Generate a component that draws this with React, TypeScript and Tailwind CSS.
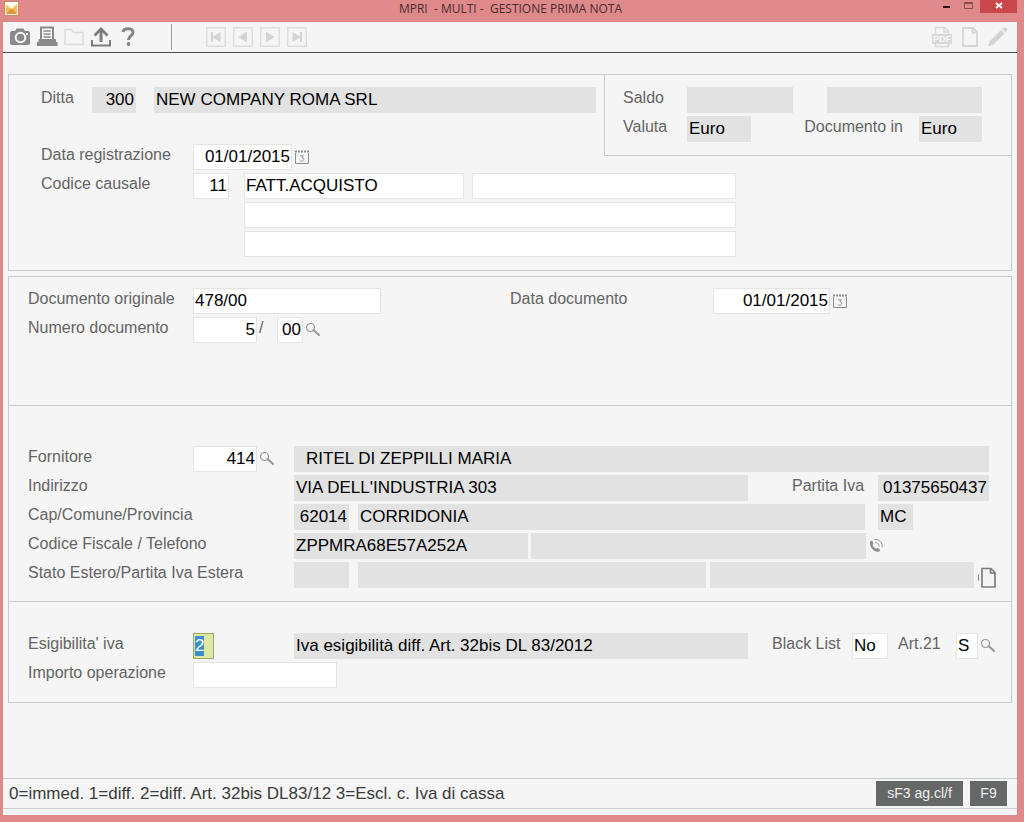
import { useEffect, useRef } from "react";
import type { ComponentProps, ReactNode } from "react";
import { clsx } from "clsx";

type FieldProps = ComponentProps<"input"> & {
  align?: "left" | "right";
  locked?: boolean;
};

function Field({ align = "left", locked = false, className, ...props }: FieldProps) {
  return (
    <input
      className={clsx(
        "h-[26px] min-w-0 border px-px text-[17px] text-black outline-none",
        locked ? "border-[#e2e2e2] bg-[#e2e2e2]" : "border-[#e4e4e4] bg-white",
        align === "right" && "text-right",
        className
      )}
      readOnly={locked}
      type="text"
      {...props}
    />
  );
}

type LabelProps = {
  children: ReactNode;
  className?: string;
  htmlFor: string;
};

function Label({ children, className, htmlFor }: LabelProps) {
  return (
    <label
      className={clsx("shrink-0 text-[16px] leading-[22px] whitespace-nowrap text-[#646464]", className)}
      htmlFor={htmlFor}
    >
      {children}
    </label>
  );
}

type IconButtonProps = {
  children: ReactNode;
  className?: string;
  disabled?: boolean;
  label: string;
};

function IconButton({ children, className, disabled, label }: IconButtonProps) {
  return (
    <button
      aria-label={label}
      className={clsx("flex shrink-0 items-center justify-center", className)}
      disabled={disabled}
      type="button"
    >
      {children}
    </button>
  );
}

function CalendarButton({ label }: { label: string }) {
  return (
    <IconButton className="mt-[5px] ml-[2px] size-4" label={label}>
      <svg className="size-4" fill="none" stroke="#8c8c8c" viewBox="0 0 16 16">
        <path d="M1.5 4v10.500h13V4" />
        <path d="M1 2.500h14" strokeDasharray="2 1" strokeWidth="2" />
        <path d="M6 6.800h3.500L8 8.800c2.600 0 2.300 3.400-.4 3.400-.8 0-1.300-.3-1.600-.7" strokeWidth="0.900" />
      </svg>
    </IconButton>
  );
}

function SearchButton({ label }: { label: string }) {
  return (
    <IconButton className="mt-[5px] ml-[2px] size-4" label={label}>
      <svg className="size-4" fill="none" stroke="#9a9a9a" viewBox="0 0 16 16">
        <circle cx="5.500" cy="5.500" r="4" strokeWidth="1.200" />
        <path d="m8.500 8 5.500 5" strokeLinecap="round" strokeWidth="2.200" />
      </svg>
    </IconButton>
  );
}

const navigation = [
  { label: "Primo", path: "M5 5v10h2v-4.500L14.500 15V5L7 9.500V5z" },
  { label: "Precedente", path: "M14 4.500v11L5.500 10z" },
  { label: "Successivo", path: "M6 4.500v11l8.500-5.500z" },
  { label: "Ultimo", path: "M15 5v10h-2v-4.500L5.500 15V5L13 9.500V5z" }
];

function TitleBar() {
  return (
    <header className="flex h-[22px] items-start">
      <div className="w-21 shrink-0 pt-px pl-px">
        <svg className="size-[15px]" viewBox="0 0 15 15">
          <path d="M.5.500h14v14H.500z" fill="#fffbe8" stroke="#c98a62" />
          <path d="M2 3.500 7.500 8 13 3.500V13H2z" fill="#f3bd58" />
          <path d="M2 13l5.500-6L13 13z" fill="#d9963d" />
          <path d="M2 3.500 7.500 8 13 3.500" fill="none" stroke="#f9dda0" />
        </svg>
      </div>
      <h1 className="flex-1 pt-px text-center font-['Open_Sans',sans-serif] text-[12px] leading-4 whitespace-pre text-[#4a2c2e]">
        MPRI  - MULTI -  GESTIONE PRIMA NOTA
      </h1>
      <div className="flex shrink-0">
        <IconButton className="h-[13px] w-[23px]" label="Riduci a icona">
          <svg className="h-[13px] w-[9px]" viewBox="0 0 9 13">
            <path d="M2 6h7v2H2z" fill="#2b1113" />
          </svg>
        </IconButton>
        <IconButton className="h-[13px] w-[23px]" label="Ingrandisci">
          <svg className="h-[13px] w-[9px]" fill="none" stroke="#8b4a4d" viewBox="0 0 9 13">
            <path d="M.5 2.500h8v6h-8zM.500 3.500h8" />
          </svg>
        </IconButton>
        <IconButton className="h-[13px] w-[37px] bg-[#c9484c]" label="Chiudi">
          <svg className="h-[13px] w-2" stroke="#fff" strokeWidth="1.800" viewBox="0 0 8 13">
            <path d="m1 3 6 5M7 3 1 8" />
          </svg>
        </IconButton>
      </div>
    </header>
  );
}

function Toolbar() {
  return (
    <div className="flex h-[31px] items-center border-b border-[#4c4c4c] bg-[#f5f5f5] pr-2 pl-[6px]">
      <div className="flex gap-[5px]">
        <IconButton className="size-[22px]" label="Cattura schermata">
          <svg className="size-[22px]" viewBox="0 0 22 22">
            <path
              d="M3 5h3l1.500-2.500h7L16 5h3q2 0 2 2v10q0 2-2 2H3q-2 0-2-2V7q0-2 2-2z"
              fill="#8a8a8a"
            />
            <circle cx="11.500" cy="11.500" fill="#8a8a8a" r="4.800" stroke="#f5f5f5" strokeWidth="2" />
            <path d="M17 7h2v2h-2z" fill="#f5f5f5" />
          </svg>
        </IconButton>
        <IconButton className="size-[22px]" label="Stampa">
          <svg className="size-[22px]" viewBox="0 0 22 22">
            <path d="M5 1.500h12V14H5z" fill="none" stroke="#8a8a8a" strokeWidth="2" />
            <path d="M7.500 5h7M7.500 8h7M7.500 11h7" stroke="#8a8a8a" strokeWidth="1.500" />
            <path d="M4 13v1.500h14V13h2v3h1.500v4H1v-4h1.500v-3z" fill="#8a8a8a" />
          </svg>
        </IconButton>
        <IconButton className="size-[22px]" disabled label="Apri cartella">
          <svg className="size-[22px]" fill="none" stroke="#dcdcdc" strokeWidth="1.500" viewBox="0 0 22 22">
            <path d="M2 3.500h6l2.500 3H20v12H2z" strokeLinejoin="round" />
          </svg>
        </IconButton>
        <IconButton className="size-[22px]" label="Carica">
          <svg className="size-[22px]" fill="none" stroke="#7d7d7d" viewBox="0 0 22 22">
            <path d="M2 14v5.500h18V14" strokeWidth="2" />
            <path d="M11 16V4" strokeWidth="3" />
            <path d="M4.500 9.500 11 3l6.500 6.500" strokeWidth="2.800" />
          </svg>
        </IconButton>
        <IconButton className="size-[22px]" label="Aiuto">
          <svg className="size-[22px]" fill="none" stroke="#868686" viewBox="0 0 22 22">
            <path d="M6 6c1-4.500 10-4.500 10 .500 0 3.500-4.500 3.500-4.500 7.500" strokeWidth="3" />
            <circle cx="11.500" cy="18" fill="#868686" r="1.900" stroke="none" />
          </svg>
        </IconButton>
      </div>
      <div className="ml-8 h-[26px] w-px bg-[#9c9c9c]" />
      <div className="ml-[34px] flex gap-[7px]">
        {navigation.map((item) => (
          <IconButton className="size-5" disabled key={item.label} label={item.label}>
            <svg className="size-5" viewBox="0 0 20 20">
              <path d="M.7.700h18.600v18.600H.700z" fill="none" stroke="#dedede" strokeWidth="1.500" />
              <path d={item.path} fill="#d4d4d4" />
            </svg>
          </IconButton>
        ))}
      </div>
      <div className="ml-auto flex gap-[6px]">
        <IconButton className="size-[22px]" disabled label="Esporta PDF">
          <svg className="size-[22px]" fill="none" stroke="#d9d9d9" viewBox="0 0 22 22">
            <path d="M4.500 8V1.500h9L17.500 5v3M4.500 16v4.500h13V16M13 2v4h4" strokeWidth="1.500" />
            <path d="M1 8h20v10H1z" fill="#d8d8d8" stroke="none" />
            <text
              fill="#f8f8f8"
              fontFamily="Liberation Sans"
              fontSize="9"
              fontWeight="bold"
              stroke="none"
              x="2"
              y="16"
            >
              PDF
            </text>
          </svg>
        </IconButton>
        <IconButton className="size-[22px]" disabled label="Nuovo documento">
          <svg className="size-[22px]" fill="none" stroke="#d6d6d6" strokeWidth="1.800" viewBox="0 0 22 22">
            <path d="M4 2h10l4 4v14H4zM13.500 2v4.500H18" />
          </svg>
        </IconButton>
        <IconButton className="size-[22px]" disabled label="Modifica">
          <svg className="size-[22px]" fill="#d3d3d3" viewBox="0 0 22 22">
            <path d="m1 20.500 2-5.500 11-11 3.500 3.500-11 11zM15 3l2-1.500q1-.7 2 .2l1 1q.8.800 0 1.800L18.500 6.500z" />
          </svg>
        </IconButton>
      </div>
    </div>
  );
}

function CompanyPanel() {
  return (
    <section className="border border-[#c9cccd] pb-[13px]">
      <div className="flex items-start">
        <div className="flex min-w-0 flex-1 flex-col pt-3 pl-8">
          <div className="flex pr-2">
            <Label className="w-[51px]" htmlFor="ditta">Ditta</Label>
            <Field align="right" className="w-11 shrink-0" defaultValue="300" id="ditta" locked />
            <Field
              aria-label="Ragione sociale"
              className="ml-[18px] flex-1"
              defaultValue="NEW COMPANY ROMA SRL"
              locked
            />
          </div>
          <div className="mt-[31px] flex">
            <Label className="w-38" htmlFor="data-reg">Data registrazione</Label>
            <Field align="right" className="w-[99px]" defaultValue="01/01/2015" id="data-reg" />
            <CalendarButton label="Scegli data registrazione" />
          </div>
        </div>
        <div className="flex w-[407px] shrink-0 flex-col gap-[3px] border-b border-l border-[#c9cccd] pt-3 pr-[29px] pb-[13px] pl-[18px]">
          <div className="flex">
            <Label className="w-16" htmlFor="saldo">Saldo</Label>
            <Field className="w-[106px]" id="saldo" locked />
            <Field aria-label="Saldo in valuta" className="ml-auto w-[155px]" locked />
          </div>
          <div className="flex">
            <Label className="w-16" htmlFor="valuta">Valuta</Label>
            <Field className="w-16" defaultValue="Euro" id="valuta" locked />
            <Label className="ml-auto" htmlFor="doc-in">Documento in</Label>
            <Field className="ml-4 w-[63px]" defaultValue="Euro" id="doc-in" locked />
          </div>
        </div>
      </div>
      <div className="mt-[3px] flex pl-8">
        <Label className="w-38" htmlFor="causale">Codice causale</Label>
        <Field align="right" className="w-9" defaultValue="11" id="causale" />
        <div className="ml-[15px] flex max-w-[492px] flex-1 flex-col gap-[3px]">
          <div className="flex gap-2">
            <Field
              aria-label="Descrizione causale"
              className="w-[220px]"
              defaultValue="FATT.ACQUISTO"
            />
            <Field aria-label="Descrizione aggiuntiva 1" className="flex-1" />
          </div>
          <Field aria-label="Descrizione aggiuntiva 2" />
          <Field aria-label="Descrizione aggiuntiva 3" />
        </div>
      </div>
    </section>
  );
}

function DocumentSection() {
  return (
    <section className="flex flex-col gap-[3px] border-b border-[#c9cccd] pt-[11px] pb-[62px] pl-[19px]">
      <div className="flex">
        <Label className="w-[165px]" htmlFor="doc-orig">Documento originale</Label>
        <Field className="w-[188px]" defaultValue="478/00" id="doc-orig" />
        <Label className="ml-[129px] w-[203px]" htmlFor="data-doc">Data documento</Label>
        <Field align="right" className="w-[117px]" defaultValue="01/01/2015" id="data-doc" />
        <CalendarButton label="Scegli data documento" />
      </div>
      <div className="flex">
        <Label className="w-[165px]" htmlFor="num-doc">Numero documento</Label>
        <Field align="right" className="w-16" defaultValue="5" id="num-doc" />
        <Label className="w-5 pl-[2px]" htmlFor="num-sub">/</Label>
        <Field align="right" className="w-[26px]" defaultValue="00" id="num-sub" />
        <SearchButton label="Cerca documento" />
      </div>
    </section>
  );
}

function SupplierSection() {
  return (
    <section className="flex flex-col gap-[3px] border-b border-[#c9cccd] pt-10 pr-[15px] pb-3 pl-[19px]">
      <div className="flex pr-[7px]">
        <Label className="w-[165px]" htmlFor="fornitore">Fornitore</Label>
        <Field align="right" className="w-16" defaultValue="414" id="fornitore" />
        <SearchButton label="Cerca fornitore" />
        <Field
          aria-label="Nome fornitore"
          className="ml-[19px] flex-1 pl-[11px]"
          defaultValue="RITEL DI ZEPPILLI MARIA"
          locked
        />
      </div>
      <div className="flex pr-[7px]">
        <Label className="w-[266px]" htmlFor="indirizzo">Indirizzo</Label>
        <Field className="flex-1" defaultValue="VIA DELL'INDUSTRIA 303" id="indirizzo" locked />
        <Label className="ml-11 w-[86px]" htmlFor="piva">Partita Iva</Label>
        <Field align="right" className="w-[111px]" defaultValue="01375650437" id="piva" locked />
      </div>
      <div className="flex pr-[7px]">
        <Label className="w-[266px]" htmlFor="cap">Cap/Comune/Provincia</Label>
        <Field align="right" className="w-[55px]" defaultValue="62014" id="cap" locked />
        <Field aria-label="Comune" className="ml-[9px] flex-1" defaultValue="CORRIDONIA" locked />
        <Field aria-label="Provincia" className="mr-19 ml-[13px] w-[35px]" defaultValue="MC" locked />
      </div>
      <div className="flex pr-[7px]">
        <Label className="w-[266px]" htmlFor="cod-fisc">Codice Fiscale / Telefono</Label>
        <Field className="w-[234px]" defaultValue="ZPPMRA68E57A252A" id="cod-fisc" locked />
        <Field aria-label="Telefono" className="ml-[3px] flex-1" locked />
        <IconButton className="mt-[5px] mr-[105px] ml-[2px] size-4" label="Chiama">
          <svg className="size-4" fill="none" stroke="#8e8e8e" viewBox="0 0 16 16">
            <path
              d="M2 3.500 4 2.500l1.500 3L4.500 7c.5 1.500 2 3 3.500 3.800l1.300-1 3 1.900-1.100 1.900C6.500 15 1 9 2 3.500z"
              fill="#8e8e8e"
              stroke="none"
            />
            <path d="M7 4.500c2.500 0 4.300 1.700 4.300 4.200M6.500 1.500c4.500-.5 8.500 3 7.600 8" strokeWidth="0.900" />
          </svg>
        </IconButton>
      </div>
      <div className="flex">
        <Label className="w-[266px]" htmlFor="stato">Stato Estero/Partita Iva Estera</Label>
        <Field className="w-[55px]" id="stato" locked />
        <Field aria-label="Descrizione stato estero" className="ml-[9px] flex-1" locked />
        <Field aria-label="Partita iva estera" className="ml-1 w-[264px]" locked />
        <IconButton className="mt-[5px] ml-1 h-[22px] w-[18px]" label="Apri allegato">
          <svg className="h-[22px] w-[18px]" fill="none" stroke="#7e7e7e" viewBox="0 0 18 22">
            <path d="M4 1.500h9l4 4V20H4zM12.500 1.500V6H17" strokeWidth="1.700" />
            <path d="M.5 7.500v6" />
          </svg>
        </IconButton>
      </div>
    </section>
  );
}

function VatSection() {
  const vatCode = useRef<HTMLInputElement>(null);

  useEffect(() => {
    vatCode.current?.focus();
    vatCode.current?.select();
  }, []);

  return (
    <section className="flex flex-col gap-[3px] pt-[31px] pb-[14px] pl-[19px]">
      <div className="flex pr-[15px]">
        <Label className="w-[165px]" htmlFor="esig">Esigibilita' iva</Label>
        <input
          className="h-[26px] w-[21px] border border-[#9aa860] bg-[#dde8a2] px-px text-[17px] text-black outline-none selection:bg-[#3c8dcb] selection:text-white"
          defaultValue="2"
          id="esig"
          ref={vatCode}
          type="text"
        />
        <Field
          aria-label="Descrizione esigibilita'"
          className="ml-20 flex-1"
          defaultValue="Iva esigibilità diff. Art. 32bis DL 83/2012"
          locked
        />
        <Label className="ml-6 w-20" htmlFor="black-list">Black List</Label>
        <Field className="w-9" defaultValue="No" id="black-list" />
        <Label className="ml-[10px] w-[58px]" htmlFor="art21">Art.21</Label>
        <Field className="w-[22px]" defaultValue="S" id="art21" />
        <SearchButton label="Cerca articolo" />
      </div>
      <div className="flex">
        <Label className="w-[165px]" htmlFor="importo">Importo operazione</Label>
        <Field className="w-36" id="importo" />
      </div>
    </section>
  );
}

function StatusBar() {
  return (
    <footer className="mb-[6px] flex h-[31px] items-center gap-[7px] border-y border-[#c9cccd] pr-[10px] pl-[6px]">
      <p className="flex-1 text-[17px] leading-6 text-[#3c3c3c]">
        0=immed. 1=diff. 2=diff. Art. 32bis DL83/12 3=Escl. c. Iva di cassa
      </p>
      <button className="h-[25px] w-[87px] bg-[#666868] text-[14px] text-[#f0f0f0]" type="button">
        sF3 ag.cl/f
      </button>
      <button className="h-[25px] w-[37px] bg-[#666868] text-[14px] text-[#f0f0f0]" type="button">
        F9
      </button>
    </footer>
  );
}

export default function App() {
  return (
    <div className="flex min-h-screen flex-col border-r-[7px] border-b-[7px] border-l-[3px] border-[#df898b] bg-[#df898b] font-['Liberation_Sans',Arial,sans-serif]">
      <TitleBar />
      <Toolbar />
      <div className="flex flex-1 flex-col bg-[#f5f5f5]">
        <main className="flex flex-1 flex-col gap-[5px] px-[5px] pt-[21px]">
          <CompanyPanel />
          <div className="border border-[#c9cccd]">
            <DocumentSection />
            <SupplierSection />
            <VatSection />
          </div>
        </main>
        <StatusBar />
      </div>
    </div>
  );
}
